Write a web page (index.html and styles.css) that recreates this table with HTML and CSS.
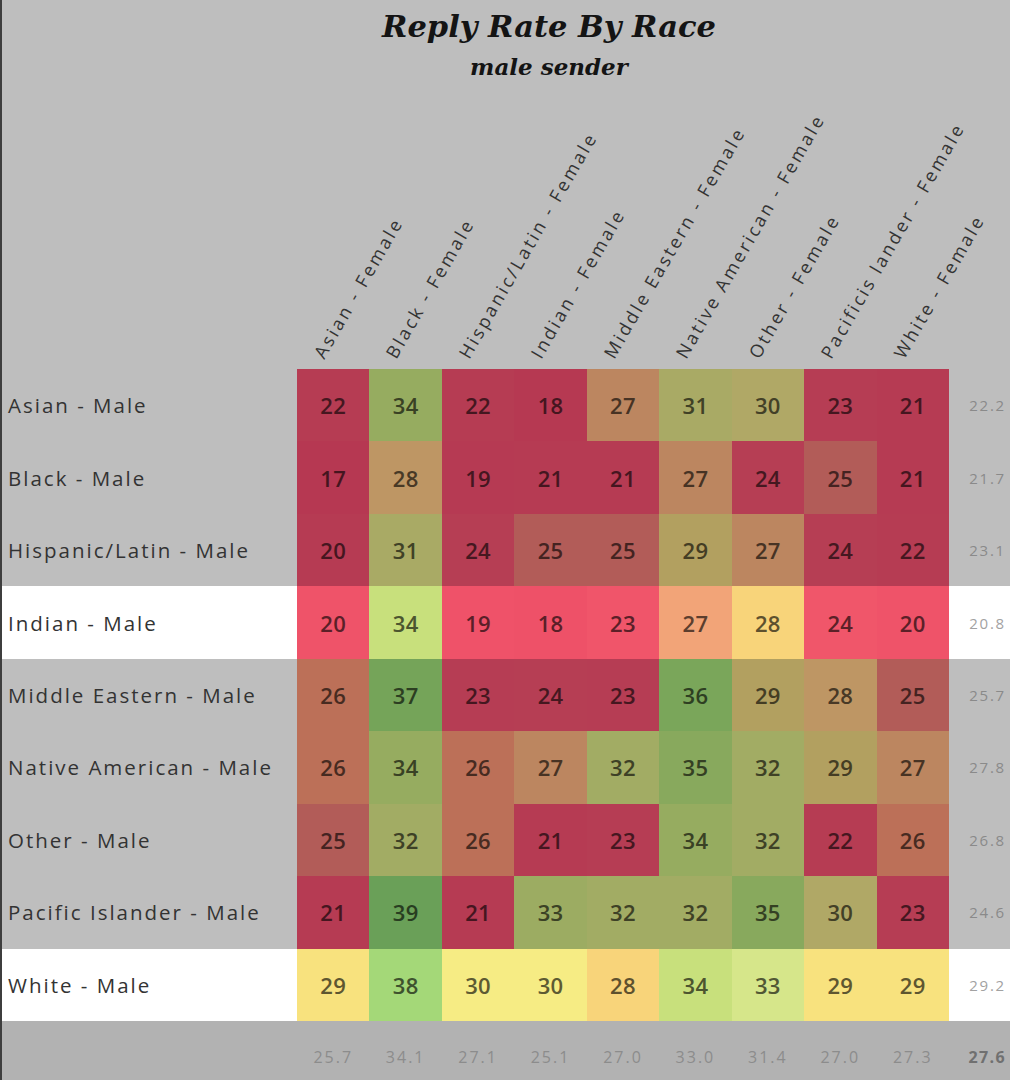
FILE: index.html
```html
<!DOCTYPE html>
<html lang="en">
<head>
<meta charset="utf-8">
<title>Reply Rate By Race</title>
<link rel="stylesheet" href="styles.css">
<script src="script.js" defer></script>
</head>
<body>
<div class="page">
  <header class="titles">
    <h1 class="title">Reply Rate By Race</h1>
    <p class="subtitle">male sender</p>
  </header>

  <div class="colheads">
    <div class="corner"></div>
    <div class="head"><span class="ht">Asian - Female</span></div>
    <div class="head"><span class="ht">Black - Female</span></div>
    <div class="head"><span class="ht">Hispanic/Latin - Female</span></div>
    <div class="head"><span class="ht">Indian - Female</span></div>
    <div class="head"><span class="ht">Middle Eastern - Female</span></div>
    <div class="head"><span class="ht">Native American - Female</span></div>
    <div class="head"><span class="ht">Other - Female</span></div>
    <div class="head"><span class="ht">Pacificis lander - Female</span></div>
    <div class="head"><span class="ht">White - Female</span></div>
  </div>

  <div class="grid">
    <div class="row">
      <div class="label">Asian - Male</div>
      <div class="cell">22</div><div class="cell">34</div><div class="cell">22</div><div class="cell">18</div><div class="cell">27</div><div class="cell">31</div><div class="cell">30</div><div class="cell">23</div><div class="cell">21</div>
      <div class="total">22.2</div>
    </div>
    <div class="row">
      <div class="label">Black - Male</div>
      <div class="cell">17</div><div class="cell">28</div><div class="cell">19</div><div class="cell">21</div><div class="cell">21</div><div class="cell">27</div><div class="cell">24</div><div class="cell">25</div><div class="cell">21</div>
      <div class="total">21.7</div>
    </div>
    <div class="row">
      <div class="label">Hispanic/Latin - Male</div>
      <div class="cell">20</div><div class="cell">31</div><div class="cell">24</div><div class="cell">25</div><div class="cell">25</div><div class="cell">29</div><div class="cell">27</div><div class="cell">24</div><div class="cell">22</div>
      <div class="total">23.1</div>
    </div>
    <div class="row hl">
      <div class="label">Indian - Male</div>
      <div class="cell">20</div><div class="cell">34</div><div class="cell">19</div><div class="cell">18</div><div class="cell">23</div><div class="cell">27</div><div class="cell">28</div><div class="cell">24</div><div class="cell">20</div>
      <div class="total">20.8</div>
    </div>
    <div class="row">
      <div class="label">Middle Eastern - Male</div>
      <div class="cell">26</div><div class="cell">37</div><div class="cell">23</div><div class="cell">24</div><div class="cell">23</div><div class="cell">36</div><div class="cell">29</div><div class="cell">28</div><div class="cell">25</div>
      <div class="total">25.7</div>
    </div>
    <div class="row">
      <div class="label">Native American - Male</div>
      <div class="cell">26</div><div class="cell">34</div><div class="cell">26</div><div class="cell">27</div><div class="cell">32</div><div class="cell">35</div><div class="cell">32</div><div class="cell">29</div><div class="cell">27</div>
      <div class="total">27.8</div>
    </div>
    <div class="row">
      <div class="label">Other - Male</div>
      <div class="cell">25</div><div class="cell">32</div><div class="cell">26</div><div class="cell">21</div><div class="cell">23</div><div class="cell">34</div><div class="cell">32</div><div class="cell">22</div><div class="cell">26</div>
      <div class="total">26.8</div>
    </div>
    <div class="row">
      <div class="label">Pacific Islander - Male</div>
      <div class="cell">21</div><div class="cell">39</div><div class="cell">21</div><div class="cell">33</div><div class="cell">32</div><div class="cell">32</div><div class="cell">35</div><div class="cell">30</div><div class="cell">23</div>
      <div class="total">24.6</div>
    </div>
    <div class="row hl">
      <div class="label">White - Male</div>
      <div class="cell">29</div><div class="cell">38</div><div class="cell">30</div><div class="cell">30</div><div class="cell">28</div><div class="cell">34</div><div class="cell">33</div><div class="cell">29</div><div class="cell">29</div>
      <div class="total">29.2</div>
    </div>
    <div class="foot">
      <div class="label"></div>
      <div class="ftot">25.7</div><div class="ftot">34.1</div><div class="ftot">27.1</div><div class="ftot">25.1</div><div class="ftot">27.0</div><div class="ftot">33.0</div><div class="ftot">31.4</div><div class="ftot">27.0</div><div class="ftot">27.3</div>
      <div class="total grand">27.6</div>
    </div>
  </div>
</div>
</body>
</html>
```

FILE: styles.css
```css
* { box-sizing: border-box; }

html, body {
  margin: 0;
  padding: 0;
  background: #bebebe;
}

body {
  width: 1010px;
  height: 1080px;
  overflow: hidden;
  font-family: "Open Sans", "Liberation Sans", sans-serif;
}

.page {
  height: 1080px;
  border-left: 2px solid #3e3e3e;
  display: flex;
  flex-direction: column;
}

.titles {
  height: 90px;
  padding-left: 86px;
  padding-top: 8px;
  text-align: center;
  color: #141414;
}

.title {
  margin: 0;
  font-family: "DejaVu Serif", "Liberation Serif", serif;
  font-style: italic;
  font-weight: 700;
  font-size: 30.5px;
  line-height: 36px;
}

.subtitle {
  margin: 10px 0 0;
  font-family: "DejaVu Serif", "Liberation Serif", serif;
  font-style: italic;
  font-weight: 700;
  font-size: 23px;
  line-height: 26px;
}

.colheads {
  height: 279px;
  display: flex;
  align-items: flex-end;
  padding-bottom: 8px;
}

.corner {
  width: 295px;
  flex: none;
}

.head {
  width: 72.44px;
  flex: none;
  padding-left: 29px;
}

.ht {
  display: block;
  white-space: nowrap;
  font-size: 18px;
  line-height: 18px;
  letter-spacing: 2.7px;
  color: #333;
  transform-origin: 0 100%;
  transform: rotate(-60deg);
  width: 0;
}

.grid {
  display: flex;
  flex-direction: column;
}

.row, .foot {
  display: flex;
  height: 72.44px;
}

.label {
  width: 295px;
  flex: none;
  display: flex;
  align-items: center;
  padding-left: 6px;
  font-size: 20.5px;
  font-weight: 500;
  letter-spacing: 2px;
  color: #333;
}

.cell {
  width: 72.44px;
  flex: none;
  display: flex;
  align-items: center;
  justify-content: center;
  font-size: 22px;
  font-weight: 600;
  letter-spacing: 0.3px;
}

.total {
  flex: 1;
  display: flex;
  align-items: center;
  justify-content: flex-end;
  padding-right: 4px;
  font-size: 15px;
  letter-spacing: 1.8px;
  color: #8a8a8a;
}

.row.hl .label,
.row.hl .total {
  background: #ffffff;
}

.row.hl .total {
  color: #a2a2a2;
}

.foot {
  height: 59px;
  background: #b2b2b2;
  align-items: flex-end;
  padding-bottom: 12px;
}

.foot .label {
  align-self: stretch;
}

.ftot {
  width: 72.44px;
  flex: none;
  text-align: center;
  font-size: 16px;
  letter-spacing: 2px;
  color: #8c8c8c;
}

.total.grand {
  font-weight: 700;
  color: #707070;
  font-size: 16px;
  letter-spacing: 1.4px;
}
```

FILE: script.js
```js
(function () {
  var dim = [
    [17, [182, 56, 82]],
    [24, [182, 62, 84]],
    [25, [178, 92, 88]],
    [26, [188, 112, 88]],
    [27, [188, 134, 96]],
    [28, [190, 150, 100]],
    [29, [178, 160, 96]],
    [30, [176, 168, 102]],
    [32, [162, 172, 100]],
    [34, [150, 172, 96]],
    [36, [122, 166, 90]],
    [39, [106, 160, 88]]
  ];
  var bright = [
    [17, [238, 80, 104]],
    [24, [240, 86, 106]],
    [27, [242, 164, 120]],
    [28, [248, 212, 122]],
    [29, [248, 226, 126]],
    [30, [246, 236, 132]],
    [33, [214, 230, 138]],
    [34, [200, 224, 124]],
    [38, [164, 216, 120]]
  ];
  function interp(stops, v) {
    if (v <= stops[0][0]) return stops[0][1];
    for (var i = 1; i < stops.length; i++) {
      if (v <= stops[i][0]) {
        var a = stops[i - 1], b = stops[i];
        var t = (v - a[0]) / (b[0] - a[0]);
        return a[1].map(function (x, k) { return Math.round(x + (b[1][k] - x) * t); });
      }
    }
    return stops[stops.length - 1][1];
  }
  var rows = document.querySelectorAll('.row');
  rows.forEach(function (row) {
    var stops = row.classList.contains('hl') ? bright : dim;
    row.querySelectorAll('.cell').forEach(function (c) {
      var v = parseFloat(c.textContent);
      var rgb = interp(stops, v);
      c.style.background = 'rgb(' + rgb.join(',') + ')';
      c.style.color = 'rgb(' + rgb.map(function (x) { return Math.round(x * 0.38); }).join(',') + ')';
    });
  });
})();
```
